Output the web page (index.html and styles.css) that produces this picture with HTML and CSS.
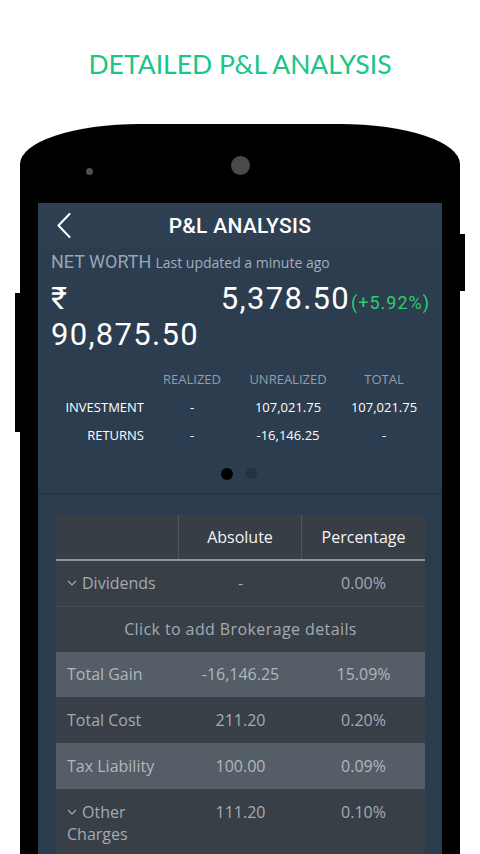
FILE: index.html
```html
<!DOCTYPE html>
<html lang="en">
<head>
<meta charset="utf-8">
<title>Detailed P&amp;L Analysis</title>
<link rel="stylesheet" href="styles.css">
</head>
<body>
<div class="page">
  <h1 class="headline">DETAILED P&amp;L ANALYSIS</h1>
  <div class="phone">
    <div class="bezel-top"><span class="sensor"></span><span class="camera"></span></div>
    <div class="screen">
      <header class="appbar">
        <svg class="back" width="14" height="25" viewBox="0 0 14 25"><polyline points="12.5,1 1.5,12.5 12.5,24" fill="none" stroke="#ffffff" stroke-width="2" stroke-linecap="round" stroke-linejoin="round"/></svg>
        <h2 class="appbar-title">P&amp;L ANALYSIS</h2>
        <span></span>
      </header>
      <section class="summary">
        <div class="nw-label"><span class="nw-title">NET WORTH</span> <span class="nw-updated">Last updated a minute ago</span></div>
        <div class="nw-values">
          <div class="nw-total"><span class="line">₹</span><span class="line">90,875.50</span></div>
          <div class="nw-gain"><span class="gain-abs">5,378.50</span><span class="gain-pct">(+5.92%)</span></div>
        </div>
        <div class="mini-table">
          <span class="mt-head"></span><span class="mt-head">REALIZED</span><span class="mt-head">UNREALIZED</span><span class="mt-head">TOTAL</span>
          <span class="mt-label">INVESTMENT</span><span class="mt-val">-</span><span class="mt-val">107,021.75</span><span class="mt-val">107,021.75</span>
          <span class="mt-label">RETURNS</span><span class="mt-val">-</span><span class="mt-val">-16,146.25</span><span class="mt-val">-</span>
        </div>
        <div class="pager"><span class="dot active"></span><span class="dot"></span></div>
      </section>
      <section class="details">
        <div class="card">
          <div class="card-head">
            <span class="hcell"></span><span class="hcell">Absolute</span><span class="hcell">Percentage</span>
          </div>
          <div class="row dark bordered">
            <span class="cell label"><svg class="chev" width="10" height="6" viewBox="0 0 10 6"><polyline points="1,1 5,5 9,1" fill="none" stroke="#a3abb3" stroke-width="1.2"/></svg>Dividends</span>
            <span class="cell">-</span><span class="cell">0.00%</span>
          </div>
          <div class="row dark short link">Click to add Brokerage details</div>
          <div class="row light short">
            <span class="cell label">Total Gain</span><span class="cell">-16,146.25</span><span class="cell">15.09%</span>
          </div>
          <div class="row dark">
            <span class="cell label">Total Cost</span><span class="cell">211.20</span><span class="cell">0.20%</span>
          </div>
          <div class="row light">
            <span class="cell label">Tax Liability</span><span class="cell">100.00</span><span class="cell">0.09%</span>
          </div>
          <div class="row dark top">
            <span class="cell label"><svg class="chev" width="10" height="6" viewBox="0 0 10 6"><polyline points="1,1 5,5 9,1" fill="none" stroke="#a3abb3" stroke-width="1.2"/></svg>Other Charges</span>
            <span class="cell">111.20</span><span class="cell">0.10%</span>
          </div>
        </div>
      </section>
    </div>
  </div>
</div>
</body>
</html>
```

FILE: styles.css
```css
html, body {
  margin: 0;
  padding: 0;
  width: 480px;
  height: 854px;
  overflow: hidden;
  background: #ffffff;
}

.page {
  width: 480px;
  padding-top: 44px;
}

.headline {
  margin: 0;
  height: 40px;
  line-height: 40px;
  text-align: center;
  font-family: "Lato", "Open Sans", sans-serif;
  font-weight: 400;
  font-size: 26.5px;
  color: #19c587;
  letter-spacing: 0;
}

.phone {
  position: relative;
  margin: 40px 0 0 20px;
  width: 440px;
  min-height: 760px;
  background: #000000;
  border-radius: 120px 120px 0 0 / 40px 40px 0 0;
}

.phone::before {
  content: "";
  position: absolute;
  left: -5px;
  top: 169px;
  width: 5px;
  height: 139px;
  background: #000000;
}

.phone::after {
  content: "";
  position: absolute;
  right: -5px;
  top: 110px;
  width: 5px;
  height: 57px;
  background: #000000;
}

.bezel-top {
  height: 79px;
  display: flex;
  align-items: flex-start;
}

.sensor {
  width: 7px;
  height: 7px;
  border-radius: 50%;
  background: #505050;
  margin: 44px 0 0 66px;
}

.camera {
  width: 19px;
  height: 19px;
  border-radius: 50%;
  background: #4a4a4a;
  margin: 32px 0 0 138px;
}

.screen {
  margin-left: 18px;
  width: 404px;
  min-height: 681px;
  background: #2b3c4e;
}

.appbar {
  height: 45px;
  background: #2f4052;
  display: grid;
  grid-template-columns: 1fr auto 1fr;
  align-items: center;
}

.back {
  margin-left: 19px;
  display: block;
}

.appbar-title {
  margin: 0;
  font-family: "Roboto", sans-serif;
  font-weight: 500;
  font-size: 21px;
  color: #ffffff;
  letter-spacing: 0.3px;
}

.summary {
  background: #2c3d4f;
  padding-top: 3px;
  padding-bottom: 13px;
  border-bottom: 2px solid #273747;
}

.nw-label {
  padding: 0 12px 0 13px;
  line-height: 22px;
  white-space: nowrap;
}

.nw-title {
  font-family: "Roboto", sans-serif;
  font-size: 18px;
  color: #97a6b7;
}

.nw-updated {
  font-family: "Open Sans", sans-serif;
  font-size: 14px;
  color: #a3afbc;
}

.nw-values {
  margin-top: 7px;
  padding: 0 12px 0 13px;
  display: flex;
  justify-content: space-between;
  align-items: flex-start;
  font-family: "Roboto", sans-serif;
  color: #ffffff;
}

.nw-total {
  display: flex;
  flex-direction: column;
  font-size: 31px;
  line-height: 36px;
  letter-spacing: 1.3px;
}

.nw-gain {
  line-height: 36px;
  white-space: nowrap;
}

.gain-abs {
  font-size: 31px;
  letter-spacing: 1.3px;
}

.gain-pct {
  font-size: 18px;
  letter-spacing: 1px;
  color: #2ecc71;
  margin-left: 1px;
}

.mini-table {
  width: 384px;
  margin: 12px auto 0;
  display: grid;
  grid-template-columns: repeat(4, 96px);
  grid-auto-rows: 28px;
  line-height: 28px;
  font-family: "Open Sans", sans-serif;
  font-size: 13px;
  white-space: nowrap;
}

.mt-head {
  text-align: center;
  color: #929eab;
}

.mt-label {
  text-align: right;
  color: #ffffff;
}

.mt-val {
  text-align: center;
  color: #ffffff;
}

.pager {
  margin-top: 19px;
  display: flex;
  justify-content: center;
  gap: 13px;
  padding-right: 2px;
}

.dot {
  width: 11px;
  height: 11px;
  border-radius: 50%;
  background: #233241;
}

.dot.active {
  width: 12px;
  height: 12px;
  margin-top: -0.5px;
  background: #000000;
}

.details {
  padding: 20px 17px 0 18px;
}

.card {
  font-family: "Open Sans", sans-serif;
  font-size: 16px;
}

.card-head {
  height: 46px;
  box-sizing: border-box;
  display: grid;
  grid-template-columns: 1fr 1fr 1fr;
  background: #383e45;
  border-bottom: 2px solid #8e949a;
}

.hcell {
  display: flex;
  align-items: center;
  justify-content: center;
  color: #f4f4f4;
  border-right: 1px solid #4f555c;
}

.hcell:last-child {
  border-right: none;
}

.row {
  height: 46px;
  box-sizing: border-box;
  display: grid;
  grid-template-columns: 1fr 1fr 1fr;
  align-items: center;
  line-height: 22px;
}

.row.short {
  height: 45px;
}

.row.bordered {
  border-bottom: 1px solid #464c53;
}

.row.dark {
  background: #393f46;
  color: #a3abb3;
}

.row.light {
  background: #555d66;
  color: #b1b7bd;
}

.row.link {
  display: flex;
  justify-content: center;
  letter-spacing: 0.4px;
}

.row.top {
  align-items: start;
  height: 70px;
  padding-top: 12px;
}

.cell {
  text-align: center;
}

.cell.label {
  text-align: left;
  padding-left: 11px;
}

.chev {
  margin-right: 5px;
  vertical-align: 3px;
}
```
